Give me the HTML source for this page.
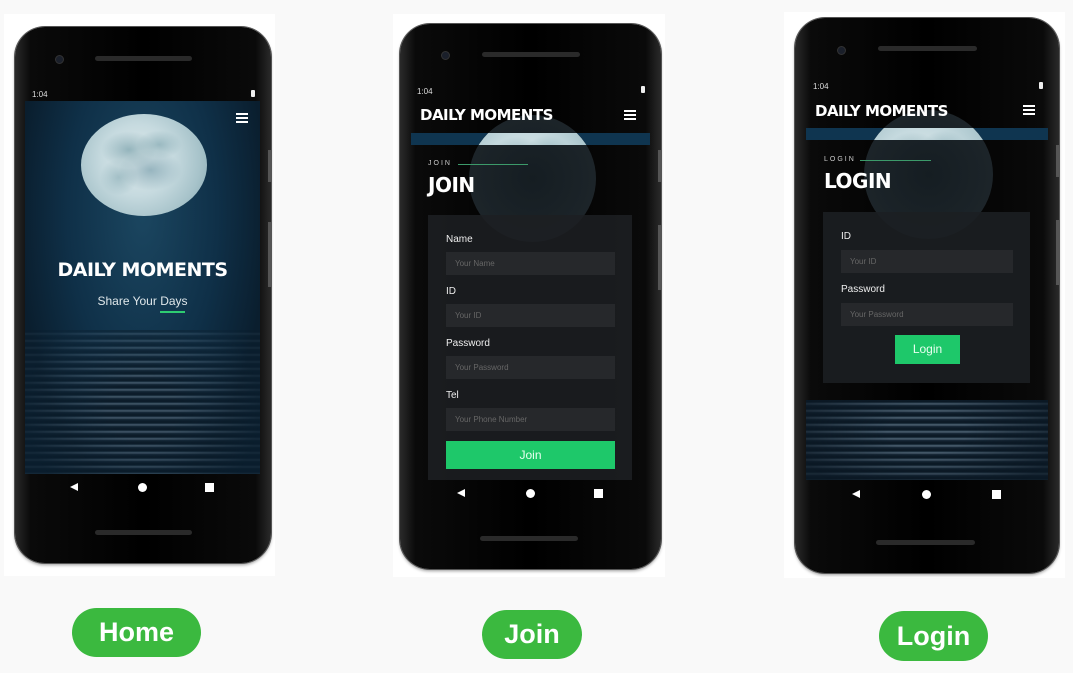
<!DOCTYPE html>
<html><head><meta charset="utf-8"><style>
*{margin:0;padding:0;box-sizing:border-box}
body{width:1073px;height:673px;background:#f9f9f9;position:relative;overflow:hidden;font-family:"Liberation Sans","DejaVu Sans",sans-serif}
.a{position:absolute}
.card{background:#fff}
.phone{background:linear-gradient(90deg,#2a2a2a,#0a0a0a 6%,#000 50%,#0a0a0a 94%,#2a2a2a);border-radius:30px;box-shadow:0 0 0 1px #555,0 2px 3px rgba(0,0,0,.4)}
.spk{background:#2a2a2a;height:5px;border-radius:3px}
.cam{width:9px;height:9px;border-radius:50%;background:#1a1f2a;border:1px solid #333}
.st{color:#ddd;font-size:8px}
.bat{width:4px;height:7px;background:#eee;border-radius:1px}
.ham{width:12px;height:10px;border-top:2px solid #fff;border-bottom:2px solid #fff}
.ham:after{content:"";position:absolute;left:0;top:2px;width:12px;height:2px;background:#fff}
.tri{width:0;height:0;border-top:4.5px solid transparent;border-bottom:4.5px solid transparent;border-right:8px solid #fff}
.dot{width:9px;height:9px;border-radius:50%;background:#fff}
.sq{width:9px;height:9px;background:#fff}
.moon{border-radius:50%;background:
 radial-gradient(ellipse 22% 18% at 38% 35%,rgba(120,160,170,.7),transparent),
 radial-gradient(ellipse 18% 14% at 62% 30%,rgba(120,160,170,.6),transparent),
 radial-gradient(ellipse 25% 20% at 55% 55%,rgba(110,150,165,.6),transparent),
 radial-gradient(ellipse 15% 18% at 30% 62%,rgba(120,160,170,.5),transparent),
 radial-gradient(circle at 45% 45%,#dfeaec 0,#c6dadf 40%,#a7c3ca 70%,#7fa2ab 100%)}
.water{background:repeating-linear-gradient(180deg,#0c1a26 0,#0c1a26 2px,#2e4353 3px,#56697a 4px,#1b2d3c 5px,#0c1a26 7px)}
.title{font-family:"DejaVu Sans","Liberation Sans",sans-serif;font-weight:bold;color:#fff;letter-spacing:-.5px}
.lbl{color:#eee;font-size:10px}
.inp{background:#26282b;color:#666;font-size:8px;padding-left:9px;line-height:23px;height:23px}
.gbtn{background:#1ec86a;color:#e9fff0;font-size:12px;text-align:center}
.pill{background:#3bb93f;color:#fff;font-weight:bold;font-size:27px;text-align:center;border-radius:25px;font-family:"Liberation Sans","DejaVu Sans",sans-serif}
</style></head><body>

<div class="a card" style="left:4px;top:14px;width:271px;height:562px"></div>
<div class="a card" style="left:393px;top:14px;width:272px;height:563px"></div>
<div class="a card" style="left:784px;top:12px;width:281px;height:566px"></div>

<!-- HOME PHONE -->
<div class="a phone" style="left:15px;top:27px;width:256px;height:536px"></div>
<div class="a" style="left:268px;top:150px;width:4px;height:32px;background:#555"></div>
<div class="a" style="left:268px;top:222px;width:4px;height:65px;background:#555"></div>
<div class="a cam" style="left:55px;top:55px"></div>
<div class="a spk" style="left:95px;top:56px;width:97px"></div>
<div class="a spk" style="left:95px;top:530px;width:97px"></div>
<div class="a st" style="left:32px;top:90px">1:04</div>
<div class="a bat" style="left:251px;top:90px"></div>
<div class="a" style="left:25px;top:101px;width:235px;height:373px;background:radial-gradient(ellipse at 50% 30%,#1b4660 0,#0f3048 45%,#0a1e2e 75%)"></div>
<div class="a water" style="left:25px;top:330px;width:235px;height:144px;-webkit-mask:radial-gradient(ellipse 50% 75% at 50% 55%,#000 30%,rgba(0,0,0,.2) 100%);opacity:.85"></div>
<div class="a moon" style="left:81px;top:114px;width:126px;height:102px"></div>
<div class="a ham" style="left:236px;top:113px"></div>
<div class="a title" style="left:25px;top:259px;width:235px;text-align:center;font-size:19px">DAILY MOMENTS</div>
<div class="a" style="left:25px;top:294px;width:235px;text-align:center;font-size:12px;color:#dfe7ea">Share Your Days</div>
<div class="a" style="left:160px;top:311px;width:25px;height:2px;background:#2ecc71"></div>
<div class="a tri" style="left:70px;top:483px"></div>
<div class="a dot" style="left:138px;top:483px"></div>
<div class="a sq" style="left:205px;top:483px"></div>

<!-- JOIN PHONE -->
<div class="a phone" style="left:400px;top:24px;width:261px;height:545px"></div>
<div class="a" style="left:658px;top:150px;width:4px;height:32px;background:#555"></div>
<div class="a" style="left:658px;top:225px;width:4px;height:65px;background:#555"></div>
<div class="a cam" style="left:441px;top:51px"></div>
<div class="a spk" style="left:482px;top:52px;width:98px"></div>
<div class="a spk" style="left:480px;top:536px;width:98px"></div>
<div class="a st" style="left:417px;top:87px">1:04</div>
<div class="a bat" style="left:641px;top:86px"></div>
<div class="a" style="left:411px;top:133px;width:239px;height:12px;background:#0f3550"></div>
<div class="a" style="left:469px;top:115px;width:127px;height:127px;border-radius:50%;background:radial-gradient(circle,#151d22 0,#1b2328 60%,#22292d 100%);overflow:hidden">
  <div class="a moon" style="left:0;top:0;width:127px;height:127px;clip-path:inset(18px 0 97px 0)"></div></div>
<div class="a title" style="left:420px;top:106px;font-size:15px">DAILY MOMENTS</div>
<div class="a ham" style="left:624px;top:110px"></div>
<div class="a" style="left:428px;top:160px;font-size:7px;color:#ccc;letter-spacing:2px">JOIN</div>
<div class="a" style="left:458px;top:164px;width:70px;height:1px;background:#3c9a6a"></div>
<div class="a title" style="left:428px;top:173px;font-size:20px">JOIN</div>
<div class="a" style="left:428px;top:215px;width:204px;height:265px;background:rgba(28,31,34,.88)"></div>
<div class="a lbl" style="left:446px;top:234px">Name</div>
<div class="a inp" style="left:446px;top:252px;width:169px">Your Name</div>
<div class="a lbl" style="left:446px;top:286px">ID</div>
<div class="a inp" style="left:446px;top:304px;width:169px">Your ID</div>
<div class="a lbl" style="left:446px;top:338px">Password</div>
<div class="a inp" style="left:446px;top:356px;width:169px">Your Password</div>
<div class="a lbl" style="left:446px;top:390px">Tel</div>
<div class="a inp" style="left:446px;top:408px;width:169px">Your Phone Number</div>
<div class="a gbtn" style="left:446px;top:441px;width:169px;height:28px;line-height:28px">Join</div>
<div class="a tri" style="left:457px;top:489px"></div>
<div class="a dot" style="left:526px;top:489px"></div>
<div class="a sq" style="left:594px;top:489px"></div>

<!-- LOGIN PHONE -->
<div class="a phone" style="left:795px;top:18px;width:264px;height:555px"></div>
<div class="a" style="left:1056px;top:145px;width:4px;height:32px;background:#555"></div>
<div class="a" style="left:1056px;top:220px;width:4px;height:65px;background:#555"></div>
<div class="a cam" style="left:837px;top:46px"></div>
<div class="a spk" style="left:878px;top:46px;width:99px"></div>
<div class="a spk" style="left:876px;top:540px;width:99px"></div>
<div class="a st" style="left:813px;top:82px">1:04</div>
<div class="a bat" style="left:1039px;top:82px"></div>
<div class="a" style="left:806px;top:128px;width:242px;height:12px;background:#0f3550"></div>
<div class="a" style="left:864px;top:110px;width:129px;height:129px;border-radius:50%;background:radial-gradient(circle,#151d22 0,#1b2328 60%,#22292d 100%);overflow:hidden">
  <div class="a moon" style="left:0;top:0;width:129px;height:129px;clip-path:inset(18px 0 99px 0)"></div></div>
<div class="a title" style="left:815px;top:102px;font-size:15px">DAILY MOMENTS</div>
<div class="a ham" style="left:1023px;top:105px"></div>
<div class="a" style="left:824px;top:156px;font-size:7px;color:#ccc;letter-spacing:2px">LOGIN</div>
<div class="a" style="left:860px;top:160px;width:71px;height:1px;background:#3c9a6a"></div>
<div class="a title" style="left:824px;top:169px;font-size:20px">LOGIN</div>
<div class="a" style="left:823px;top:212px;width:207px;height:171px;background:rgba(28,31,34,.9)"></div>
<div class="a lbl" style="left:841px;top:231px">ID</div>
<div class="a inp" style="left:841px;top:250px;width:172px">Your ID</div>
<div class="a lbl" style="left:841px;top:284px">Password</div>
<div class="a inp" style="left:841px;top:303px;width:172px">Your Password</div>
<div class="a gbtn" style="left:895px;top:335px;width:65px;height:29px;line-height:29px">Login</div>
<div class="a" style="left:806px;top:400px;width:242px;height:80px;background:#0b1824"></div>
<div class="a water" style="left:806px;top:400px;width:242px;height:80px;-webkit-mask:radial-gradient(ellipse 55% 90% at 50% 40%,#000 30%,rgba(0,0,0,.25) 100%)"></div>
<div class="a tri" style="left:852px;top:490px"></div>
<div class="a dot" style="left:922px;top:490px"></div>
<div class="a sq" style="left:992px;top:490px"></div>

<div class="a pill" style="left:72px;top:608px;width:129px;height:49px;line-height:49px">Home</div>
<div class="a pill" style="left:482px;top:610px;width:100px;height:49px;line-height:49px">Join</div>
<div class="a pill" style="left:879px;top:611px;width:109px;height:50px;line-height:50px">Login</div>
</body></html>
